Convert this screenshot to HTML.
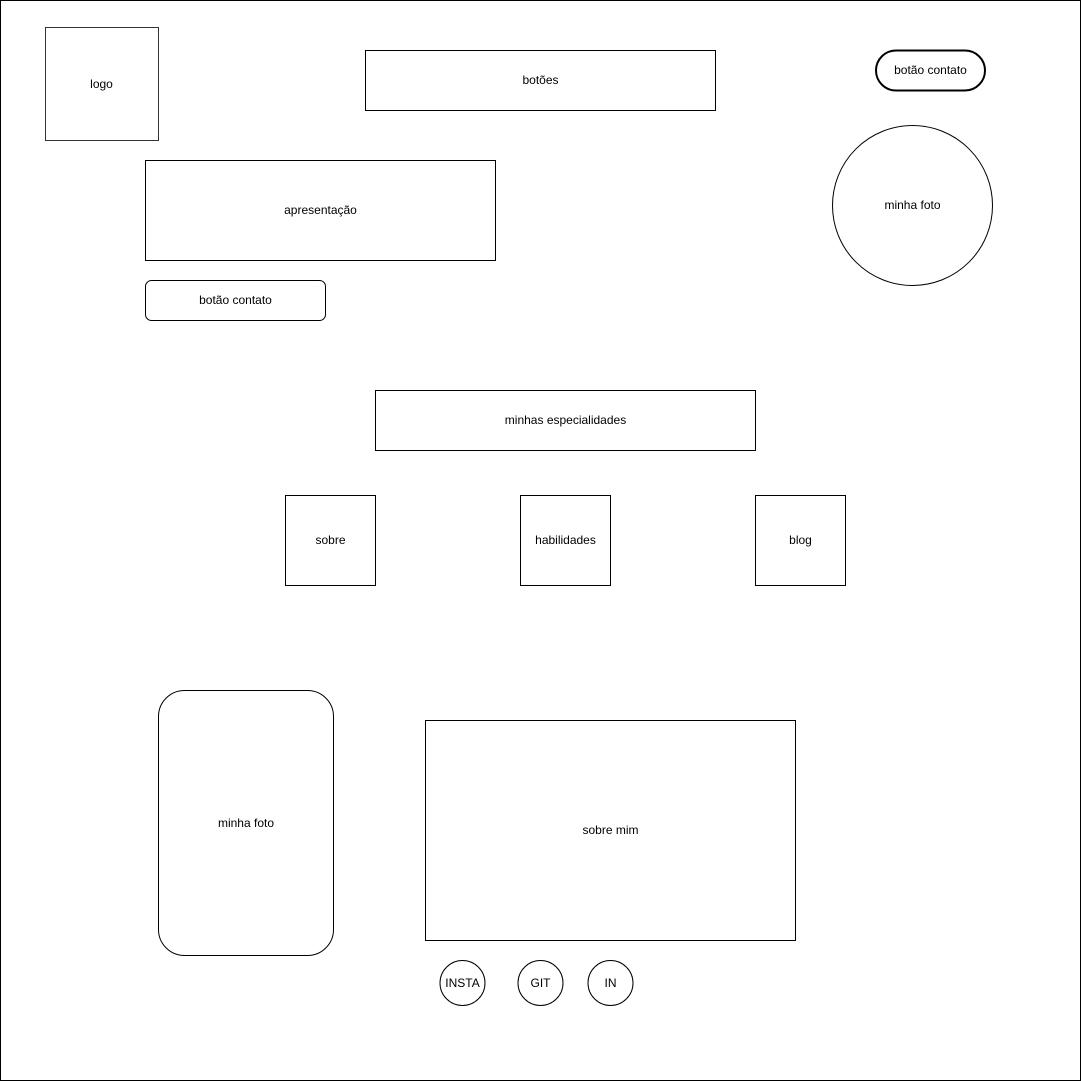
<!DOCTYPE html>
<html><head><meta charset="utf-8"><style>
html,body{margin:0;padding:0;background:#fff;}
svg{display:block}
text{font-family:"Liberation Sans",Arial,sans-serif;font-size:12px;fill:#000;text-anchor:middle;dominant-baseline:central}
</style></head><body>
<svg width="1081" height="1081" viewBox="0 0 1081 1081" xmlns="http://www.w3.org/2000/svg">
<g fill="#fff" stroke="#000" stroke-width="1">
<rect x="0.5" y="0.5" width="1080" height="1080"/>
<rect x="45.5" y="27.5" width="113" height="113" stroke="#333"/>
<rect x="365.5" y="50.5" width="350" height="60"/>
<rect x="876" y="50.5" width="109" height="40" rx="20" stroke-width="2"/>
<circle cx="912.5" cy="205.5" r="80"/>
<rect x="145.5" y="160.5" width="350" height="100"/>
<rect x="145.5" y="280.5" width="180" height="40" rx="6"/>
<rect x="375.5" y="390.5" width="380" height="60"/>
<rect x="285.5" y="495.5" width="90" height="90"/>
<rect x="520.5" y="495.5" width="90" height="90"/>
<rect x="755.5" y="495.5" width="90" height="90"/>
<rect x="158.5" y="690.5" width="175" height="265" rx="26"/>
<rect x="425.5" y="720.5" width="370" height="220"/>
<circle cx="462.5" cy="983" r="22.5"/>
<circle cx="540.5" cy="983" r="22.5"/>
<circle cx="610.5" cy="983" r="22.5"/>
</g>
<text x="101.5" y="84">logo</text>
<text x="540.5" y="80">botões</text>
<text x="930.5" y="70">botão contato</text>
<text x="912.5" y="205">minha foto</text>
<text x="320.5" y="210">apresentação</text>
<text x="235.5" y="300">botão contato</text>
<text x="565.5" y="420">minhas especialidades</text>
<text x="330.5" y="540">sobre</text>
<text x="565.5" y="540">habilidades</text>
<text x="800.5" y="540">blog</text>
<text x="246" y="823">minha foto</text>
<text x="610.5" y="830">sobre mim</text>
<text x="462.5" y="983">INSTA</text>
<text x="540.5" y="983">GIT</text>
<text x="610.5" y="983">IN</text>
</svg>
</body></html>
